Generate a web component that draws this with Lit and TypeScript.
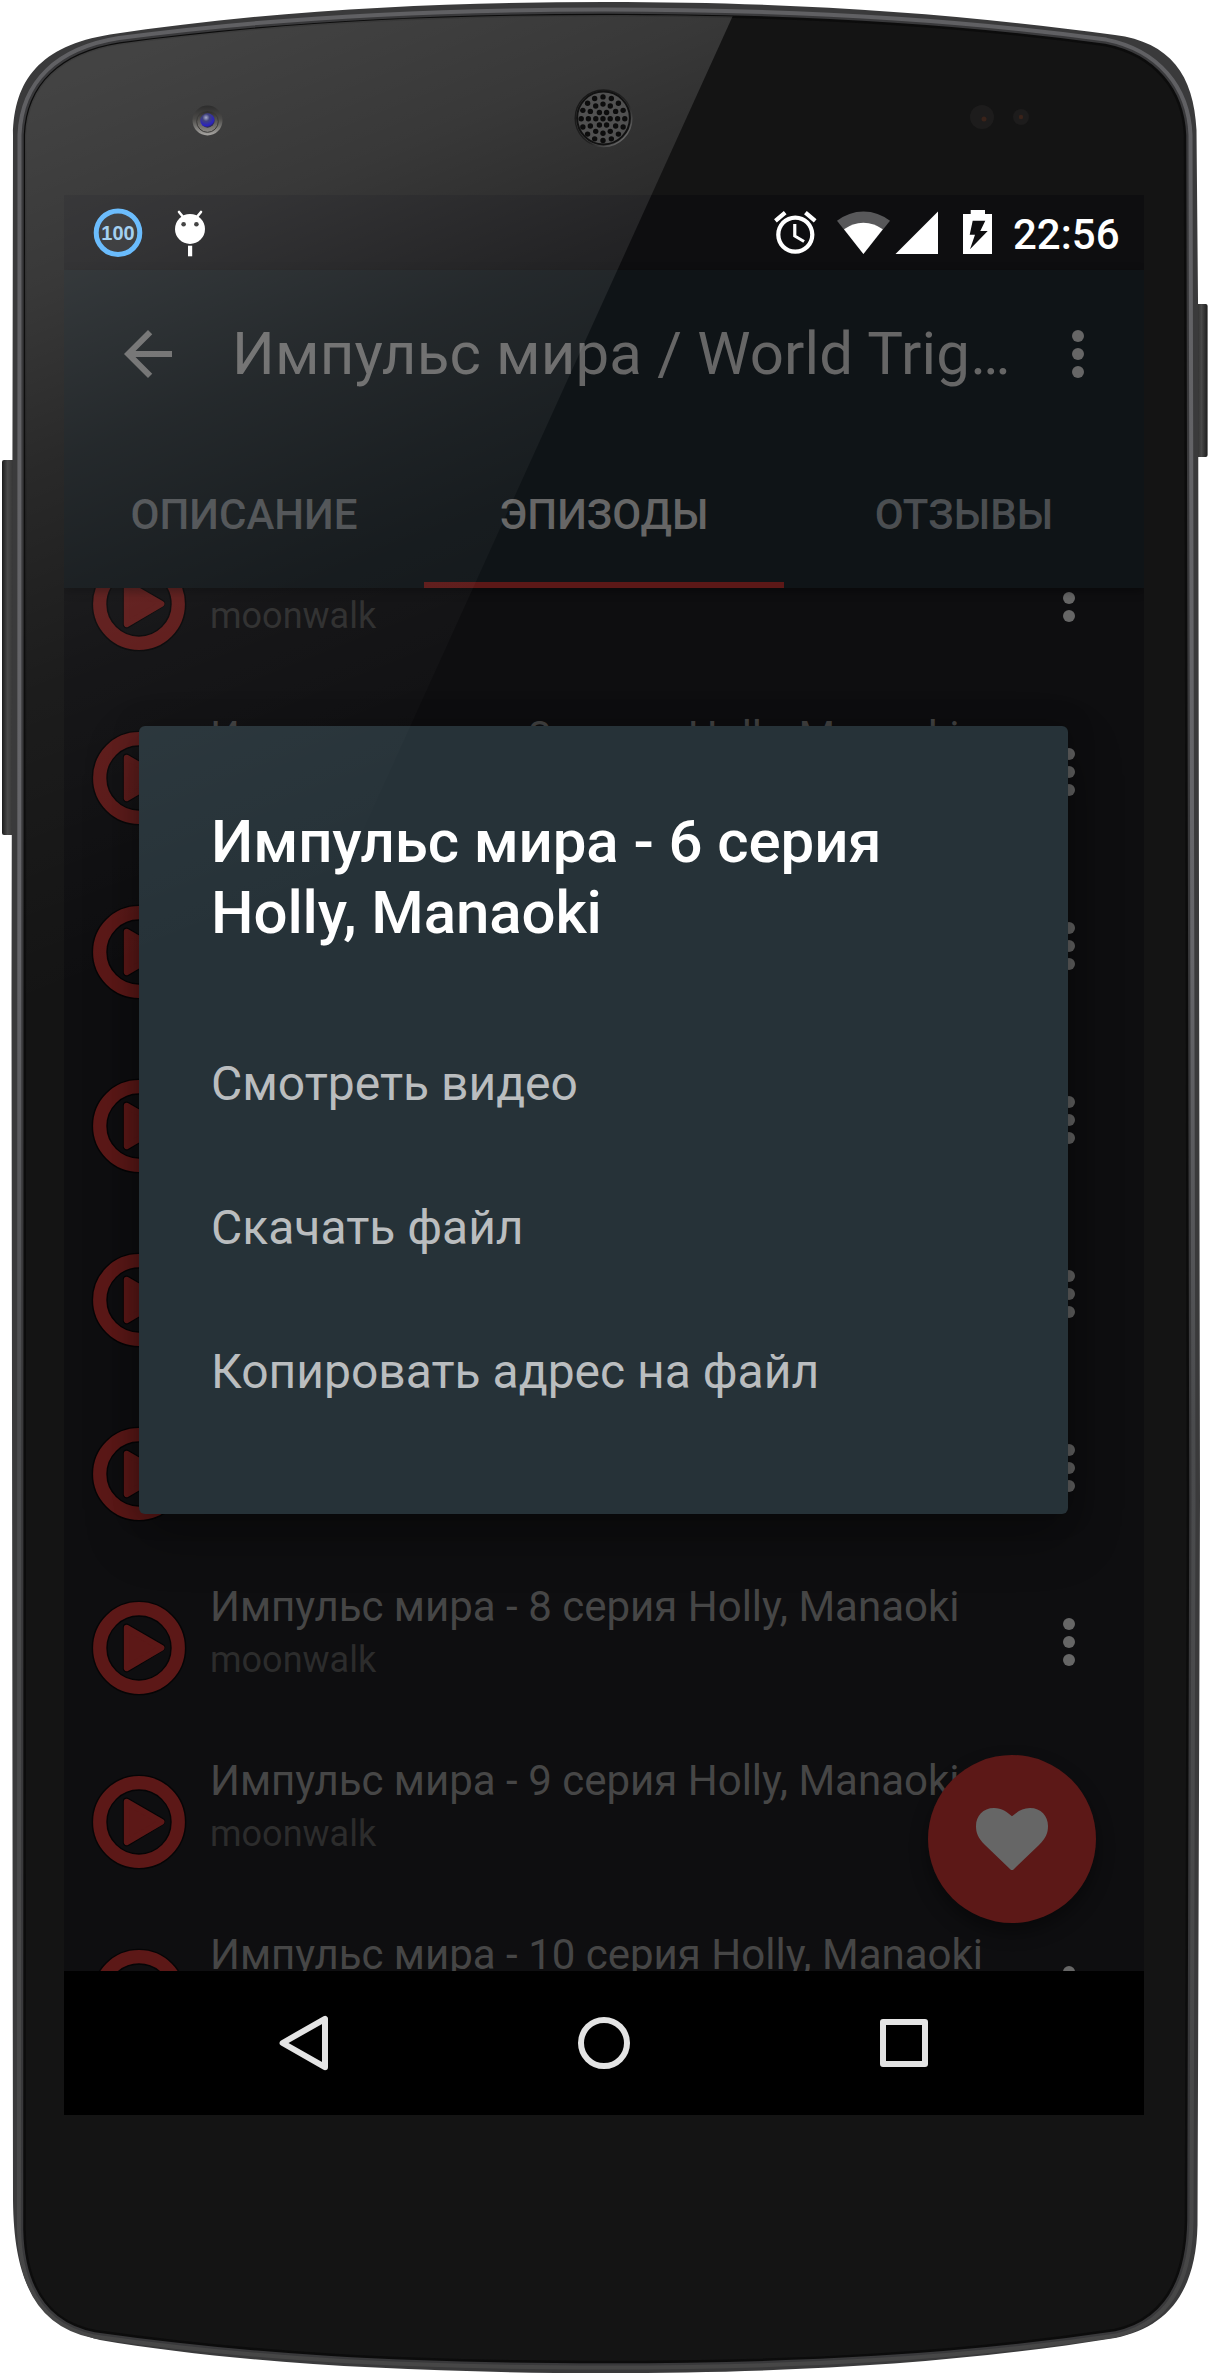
import { LitElement, html, css, svg } from "lit";
import { customElement, property } from "lit/decorators.js";

const EPISODES = [2, 3, 4, 5, 6, 7, 8, 9, 10];
const TABS = ["ОПИСАНИЕ", "ЭПИЗОДЫ", "ОТЗЫВЫ"];
const ACTIONS = ["Смотреть видео", "Скачать файл", "Копировать адрес на файл"];

const BODY =
  "M605 2C440 2 270 10 110 34.5C40 46 14 80 13 135L11.5 1000L13 2200C14 2290 40 2325 100 2340C230 2362 400 2373 605 2373C800 2373 960 2363 1115 2338C1165 2328 1196 2295 1197.5 2225L1200 1500L1198 300L1196.5 130C1194 75 1170 42 1115 35C960 14 800 2 605 2Z";
const GLASS =
  "M605 15C440 15 280 22 120 43.5C60 53 27 85 25 135L24.5 2230C26 2290 50 2322 95 2331C250 2353 400 2362 605 2362C800 2362 960 2353 1115 2330C1160 2320 1185 2285 1186 2220L1188 1500L1185 135C1183 90 1155 55 1105 45C960 25 800 15 605 15Z";

/** Positions of the earpiece perforations, laid out in concentric rings. */
const HOLES: Array<[number, number]> = [[0, 0]];
for (const [count, radius] of [[6, 7.2], [12, 14.6], [16, 21.8]]) {
  for (let i = 0; i < count; i++) {
    const a = (i / count) * Math.PI * 2;
    HOLES.push([Math.cos(a) * radius, Math.sin(a) * radius]);
  }
}

const dots = () => html`<svg width="12" height="48" viewBox="0 0 12 48" fill="#666">
  <circle cx="6" cy="6" r="6" /><circle cx="6" cy="24" r="6" /><circle cx="6" cy="42" r="6" />
</svg>`;

@customElement("device-frame")
export class DeviceFrame extends LitElement {
  static styles = css`
    :host { display: block; }
    svg { display: block; }
  `;
  render() {
    return html`<svg width="1210" height="2375" viewBox="0 0 1210 2375">
      <defs>
        <linearGradient id="btnL" x1="0" x2="1" y1="0" y2="0">
          <stop offset="0" stop-color="#1c1c1c" /><stop offset=".4" stop-color="#4a4a4a" /><stop offset="1" stop-color="#2a2a2a" />
        </linearGradient>
        <linearGradient id="btnR" x1="0" x2="1" y1="0" y2="0">
          <stop offset="0" stop-color="#202020" /><stop offset=".55" stop-color="#484848" /><stop offset="1" stop-color="#1c1c1c" />
        </linearGradient>
        <linearGradient id="rim" x1="0" x2="0" y1="0" y2="1">
          <stop offset="0" stop-color="#606063" /><stop offset=".4" stop-color="#66666a" />
          <stop offset=".6" stop-color="#4a4b4d" /><stop offset="1" stop-color="#474747" />
        </linearGradient>
      </defs>
      <rect x="2" y="460" width="14" height="375" rx="2" fill="url(#btnL)" />
      <rect x="1194" y="304" width="13.6" height="153" rx="2" fill="url(#btnR)" />
      <path d=${BODY} fill="#3a3a3b" />
      <path d=${GLASS} fill="none" stroke="url(#rim)" stroke-width="15" />
      <path d=${GLASS} fill="none" stroke="#39393b" stroke-width="7" />
      <path d=${GLASS} fill="#141414" stroke="#0c0c0c" stroke-width="2.5" />
      <circle cx="982" cy="117" r="12" fill="#1d1c1c" /><circle cx="984" cy="119" r="2.5" fill="#3a231a" />
      <circle cx="1021" cy="117" r="8" fill="#1d1c1c" /><circle cx="1021" cy="117" r="2.2" fill="#3a231a" />
    </svg>`;
  }
}

@customElement("device-gloss")
export class DeviceGloss extends LitElement {
  static styles = css`
    :host { display: block; pointer-events: none; }
    svg { display: block; }
  `;
  render() {
    return html`<svg width="1210" height="2375" viewBox="0 0 1210 2375">
      <defs>
        <linearGradient id="shine" gradientUnits="userSpaceOnUse" x1="0" y1="0" x2="370" y2="930">
          <stop offset=".1" stop-color="#fff" stop-opacity=".2" />
          <stop offset=".28" stop-color="#fff" stop-opacity=".155" />
          <stop offset=".45" stop-color="#fff" stop-opacity=".09" />
          <stop offset=".57" stop-color="#fff" stop-opacity=".056" />
          <stop offset=".65" stop-color="#fff" stop-opacity=".036" />
          <stop offset=".75" stop-color="#fff" stop-opacity=".024" />
          <stop offset=".84" stop-color="#fff" stop-opacity=".013" />
          <stop offset=".95" stop-color="#fff" stop-opacity="0" />
        </linearGradient>
        <clipPath id="glass"><path d=${GLASS} /></clipPath>
        <linearGradient id="lensRing" x1="0" x2="0" y1="0" y2="1">
          <stop offset="0" stop-color="#2c2c2c" /><stop offset=".45" stop-color="#4c4b49" /><stop offset="1" stop-color="#a8a6a3" />
        </linearGradient>
        <linearGradient id="lensInner" x1="0" x2="0" y1="0" y2="1">
          <stop offset="0" stop-color="#2a2928" /><stop offset="1" stop-color="#8d8a86" />
        </linearGradient>
        <radialGradient id="lens" cx=".4" cy=".3" r=".7">
          <stop offset="0" stop-color="#a9adc9" /><stop offset=".35" stop-color="#40427c" />
          <stop offset=".8" stop-color="#2a22c0" /><stop offset="1" stop-color="#2c2944" />
        </radialGradient>
        <linearGradient id="ear" x1="0" x2="1" y1="0" y2="1">
          <stop offset="0" stop-color="#141414" /><stop offset=".6" stop-color="#222" /><stop offset="1" stop-color="#8a8a8a" />
        </linearGradient>
      </defs>
      <path d="M0 0H740L374 806L170 1250H0Z" fill="url(#shine)" clip-path="url(#glass)" />
      <circle cx="207.5" cy="120.5" r="15" fill="url(#lensRing)" />
      <circle cx="207.5" cy="121.5" r="10.8" fill="url(#lensInner)" stroke="#3a3937" stroke-width="1" />
      <circle cx="207.5" cy="120.5" r="7.2" fill="url(#lens)" />
      <circle cx="603.5" cy="118.3" r="28.3" fill="#454545" stroke="url(#ear)" stroke-width="1.5" />
      <circle cx="603.5" cy="118" r="26.4" fill="#505050" stroke="#111" stroke-width="2" />
      ${HOLES.map(([x, y]) => svg`<circle cx=${603 + x} cy=${118.7 + y} r="2.7" fill="#0c0c0c" />`)}
    </svg>`;
  }
}

@customElement("status-bar")
export class StatusBar extends LitElement {
  static styles = css`
    :host {
      display: flex; justify-content: space-between; height: 75px; flex: none;
      background: #0e0e10; color: #fff; font: 500 42px/75px Roboto, "Liberation Sans", sans-serif;
    }
    svg { display: block; flex: none; }
    .right { display: flex; }
    .time { width: 131px; padding-top: 3px; line-height: 74px; white-space: nowrap; }
    .level { font: 700 20px "Liberation Sans", sans-serif; }
  `;
  render() {
    return html`<svg width="160" height="75" viewBox="0 0 160 75">
        <circle cx="54" cy="37.7" r="21.8" fill="#1c1d1f" stroke="#4fb0fd" stroke-width="5" />
        <text class="level" x="54" y="45" text-anchor="middle" fill="#93c8ee">100</text>
        <circle cx="126" cy="34" r="15" fill="#fff" />
        <path d="M115 17l5 6M137 17l-5 6" stroke="#fff" stroke-width="2.6" stroke-linecap="round" />
        <circle cx="119.6" cy="29.3" r="2.3" fill="#222" /><circle cx="132.4" cy="29.3" r="2.3" fill="#222" />
        <rect x="124" y="50.7" width="4.2" height="10.6" fill="#fff" />
      </svg>
      <div class="right">
        <svg width="253" height="75" viewBox="0 0 253 75" fill="#fff">
          <g transform="translate(9.8 12) scale(2.125)">
            <path d="M22 5.72l-4.6-3.86-1.29 1.53 4.6 3.86L22 5.72zM7.88 3.39L6.6 1.86 2 5.71l1.29 1.53 4.59-3.85zM12.5 8H11v6l4.75 2.85.75-1.23-4-2.37V8zM12 4c-4.97 0-9 4.03-9 9s4.02 9 9 9c4.97 0 9-4.03 9-9s-4.03-9-9-9zm0 16c-3.87 0-7-3.13-7-7s3.13-7 7-7 7 3.13 7 7-3.13 7-7 7z" />
          </g>
          <path d="M103.4 59L77 25.7A43 43 0 0 1 130 25.7Z" opacity=".31" />
          <path d="M103.4 59L84 34.3A31.6 31.6 0 0 1 122.8 34.3Z" />
          <path d="M135.5 59L178 16.5V59Z" />
          <path fill-rule="evenodd" d="M210.7 15H225V19H232V59H203V19H210.7ZM212.7 25.7L209.7 39.7H215L210 54.3L227.7 36H220.3L225.3 25.7Z" />
        </svg>
        <div class="time">22:56</div>
      </div>`;
  }
}

@customElement("app-bar")
export class AppBar extends LitElement {
  static styles = css`
    :host {
      display: block; flex: none; height: 318px; position: relative; z-index: 1;
      background: #0f1417; box-shadow: 0 3px 9px rgba(0, 0, 0, 0.4);
      font-family: Roboto, "Liberation Sans", sans-serif;
    }
    svg { display: block; flex: none; }
    .toolbar { display: flex; align-items: center; height: 168px; padding: 0 60px 0 48px; box-sizing: border-box; }
    .title {
      flex: 1; min-width: 0; margin-left: 48px; font-size: 60px; line-height: 72px; letter-spacing: 0.17px; color: #666;
      white-space: nowrap;
    }
    .tabs { display: flex; height: 150px; }
    .tab {
      flex: 1; box-sizing: border-box; height: 150px; padding-top: 2px; text-align: center;
      font-size: 42px; font-weight: 500; line-height: 150px; color: rgba(255, 255, 255, 0.25);
    }
    .active { color: #666; border-bottom: 6px solid #5c1817; }
  `;
  render() {
    return html`<div class="toolbar">
        <svg width="72" height="72" viewBox="0 0 24 24" fill="#666"><path d="M20 11H7.83l5.59-5.59L12 4l-8 8 8 8 1.41-1.41L7.83 13H20v-2z" /></svg>
        <div class="title">Импульс мира / World Trig…</div>
        ${dots()}
      </div>
      <div class="tabs">
        ${TABS.map((t, i) => html`<div class="tab ${i === 1 ? "active" : ""}">${t}</div>`)}
      </div>`;
  }
}

@customElement("episode-row")
export class EpisodeRow extends LitElement {
  static styles = css`
    :host {
      display: flex; height: 174px; flex: none; box-sizing: border-box; padding: 0 69px 0 27px;
      font-family: Roboto, "Liberation Sans", sans-serif; white-space: nowrap;
    }
    svg { display: block; flex: none; }
    .play { margin-top: 39px; }
    .text { flex: 1; min-width: 0; padding: 21px 0 0 23px; }
    .name { font-size: 42px; line-height: 50px; color: #464646; }
    .source { margin-top: 6px; font-size: 36px; line-height: 44px; color: #2c2c2c; }
    .more { margin-top: 57px; }
  `;
  @property({ type: Number }) episode = 0;
  render() {
    return html`<svg class="play" width="96" height="96" viewBox="-48 -48 96 96">
        <circle r="39.3" fill="none" stroke="#050506" stroke-width="16" />
        <circle r="39.3" fill="none" stroke="#5c1817" stroke-width="13.2" />
        <path d="M-12.2 -20.4L22 -0.5L-12.2 20.4Z" fill="#5c1817" stroke="#050506" stroke-width="8" stroke-linejoin="round" />
        <path d="M-12.2 -20.2L22.4 -0.1L-12.2 20.2Z" fill="#5c1817" stroke="#5c1817" stroke-width="6" stroke-linejoin="round" />
      </svg>
      <div class="text">
        <div class="name">Импульс мира - ${this.episode} серия Holly, Manaoki</div>
        <div class="source">moonwalk</div>
      </div>
      <div class="more">${dots()}</div>`;
  }
}

@customElement("action-dialog")
export class ActionDialog extends LitElement {
  static styles = css`
    :host {
      display: block; box-sizing: border-box; width: 929px; height: 788px; padding: 80px 72px 0;
      border-radius: 6px; background: #263238; box-shadow: 0 22px 54px rgba(0, 0, 0, 0.32), 0 0 26px rgba(0, 0, 0, 0.25);
      font-family: Roboto, "Liberation Sans", sans-serif; white-space: nowrap;
    }
    .title { font-size: 60px; font-weight: 500; line-height: 71px; letter-spacing: -0.11px; color: #fff; margin-bottom: 64px; }
    .item { font-size: 48px; line-height: 144px; color: #babdbf; }
  `;
  render() {
    return html`<div class="title">Импульс мира - 6 серия<br />Holly, Manaoki</div>
      ${ACTIONS.map((a) => html`<div class="item">${a}</div>`)}`;
  }
}

@customElement("nav-bar")
export class NavBar extends LitElement {
  static styles = css`
    :host { display: flex; align-items: center; justify-content: space-between; flex: none; height: 144px; box-sizing: border-box; padding: 0 204px; background: #000; }
    svg { display: block; }
  `;
  render() {
    return html`<svg width="72" height="72" viewBox="0 0 72 72" fill="none" stroke="#e4e4e4" stroke-width="6" stroke-linejoin="round"><path d="M14.6 36L57 11.8V60.2Z" /></svg>
      <svg width="72" height="72" viewBox="0 0 72 72" fill="none" stroke="#e4e4e4" stroke-width="6"><circle cx="36" cy="36" r="23" /></svg>
      <svg width="72" height="72" viewBox="0 0 72 72" fill="none" stroke="#e4e4e4" stroke-width="6" stroke-linejoin="round"><path d="M15 15H57V57H15Z" /></svg>`;
  }
}

@customElement("app-root")
export class AppRoot extends LitElement {
  static styles = css`
    :host { display: block; width: 1210px; height: 2375px; background: #fff; }
    .phone { position: relative; box-sizing: border-box; width: 1210px; height: 2375px; padding: 195px 66px 260px 64px; overflow: hidden; }
    .layer { position: absolute; top: 0; left: 0; }
    .gloss { z-index: 5; }
    .screen { position: relative; display: flex; flex-direction: column; width: 1080px; height: 1920px; overflow: hidden; background: #0e0e10; }
    .list { flex: 1; min-height: 0; overflow: hidden; }
    .rows { display: flex; flex-direction: column; margin-top: -71px; }
    .fab {
      position: absolute; left: 864px; top: 1560px; width: 168px; height: 168px; border-radius: 50%;
      background: #5c1817; box-shadow: 0 9px 18px rgba(0, 0, 0, 0.4);
      display: flex; align-items: center; justify-content: center;
    }
    .dialog { position: absolute; left: 75px; top: 531px; z-index: 3; }
  `;
  render() {
    return html`<div class="phone">
      <device-frame class="layer"></device-frame>
      <div class="screen">
        <status-bar></status-bar>
        <app-bar></app-bar>
        <div class="list">
          <div class="rows">${EPISODES.map((n) => html`<episode-row .episode=${n}></episode-row>`)}</div>
        </div>
        <nav-bar></nav-bar>
        <div class="fab">
          <svg width="72" height="63" viewBox="-36 0 72 63" fill="#666">
            <path d="M-1.5 61.4L-27 37C-34 30 -36 25 -36 18C-36 8 -29 0 -18 0C-10 0 -5 4 0 8.3C5 4 10 0 18 0C29 0 36 8 36 18C36 25 34 30 27 37L1.5 61.4Q0 62.6 -1.5 61.4Z" />
          </svg>
        </div>
        <action-dialog class="dialog"></action-dialog>
      </div>
      <device-gloss class="layer gloss"></device-gloss>
    </div>`;
  }
}
